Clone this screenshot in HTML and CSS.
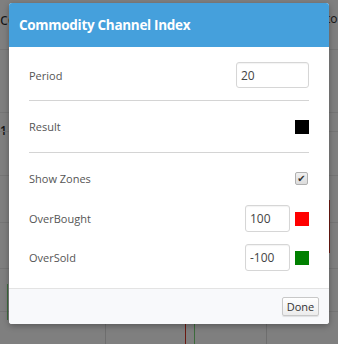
FILE: index.html
```html
<!DOCTYPE html>
<html lang="en">
<head>
    <meta charset="UTF-8">
    <meta name="viewport" content="width=device-width, initial-scale=1.0">
    <title>Commodity Channel Index</title>
    <link rel="stylesheet" href="styles.css">
</head>
<body>
    <!-- chart behind the modal overlay -->
    <div class="chart">
        <span class="chart-text left">ce</span>
        <span class="chart-text right">to</span>
        <span class="chart-text mid">1 l</span>
        <div class="hline" style="top: 49px"></div>
        <div class="hline" style="top: 112px"></div>
        <div class="hline" style="top: 131px"></div>
        <div class="hline" style="top: 175px"></div>
        <div class="hline" style="top: 222px"></div>
        <div class="hline" style="top: 268px"></div>
        <div class="hline" style="top: 311px"></div>
        <div class="vline" style="left: 105px"></div>
        <div class="vline" style="left: 266px"></div>
        <div class="vline red" style="left: 185px; top: 318px; height: 26px"></div>
        <div class="vline green" style="left: 194px; top: 318px; height: 26px"></div>
        <div class="vline green" style="left: 7px; top: 284px; height: 36px"></div>
        <div class="vline red" style="left: 329px; top: 200px; height: 53px"></div>
    </div>

    <div class="dialog">
        <div class="dialog-header">Commodity Channel Index</div>
        <div class="dialog-body">
            <div class="row row-period">
                <label>Period</label>
                <input class="field wide" type="text" value="20">
            </div>
            <div class="divider"></div>
            <div class="row row-result">
                <label>Result</label>
                <span class="swatch black"></span>
            </div>
            <div class="divider"></div>
            <div class="row row-zones">
                <label>Show Zones</label>
                <span class="check">&#10004;</span>
            </div>
            <div class="row row-level">
                <label>OverBought</label>
                <div class="controls">
                    <input class="field" type="text" value="100">
                    <span class="swatch red"></span>
                </div>
            </div>
            <div class="row row-level">
                <label>OverSold</label>
                <div class="controls">
                    <input class="field" type="text" value="-100">
                    <span class="swatch green"></span>
                </div>
            </div>
        </div>
        <div class="dialog-footer">
            <button class="done-button">Done</button>
        </div>
    </div>
</body>
</html>
```

FILE: styles.css
```css
* {
    margin: 0;
    padding: 0;
    box-sizing: border-box;
    font-family: 'Open Sans', 'Noto Sans', sans-serif;
}

body {
    background-color: #7f7f7f;
    width: 338px;
    height: 344px;
    overflow: hidden;
    position: relative;
    padding: 3px 0 0 9px;
}

.chart {
    position: absolute;
    top: 0;
    left: 0;
    width: 338px;
    height: 344px;
}

.chart-text {
    position: absolute;
    color: #141414;
    font-size: 16px;
}

.chart-text.left { left: 0; top: 8px; }
.chart-text.right { left: 326px; top: 10px; font-size: 12px; }
.chart-text.mid { left: 0; top: 122px; font-size: 12px; font-weight: 600; }

.hline {
    position: absolute;
    left: 0;
    width: 338px;
    height: 1px;
    background: #757575;
}

.vline {
    position: absolute;
    top: 324px;
    width: 1px;
    height: 20px;
    background: #6e6e6e;
}

.vline.red { background: #6b1a12; }
.vline.green { background: #3c6b3c; }

.dialog {
    position: relative;
    width: 320px;
    height: 321px;
    background: #ffffff;
    border-radius: 3px;
    box-shadow: 0 2px 6px rgba(0, 0, 0, 0.3);
    display: flex;
    flex-direction: column;
    overflow: hidden;
}

.dialog-header {
    height: 44px;
    background: #45a0dc;
    color: #ffffff;
    font-size: 13.5px;
    font-weight: 700;
    display: flex;
    align-items: center;
    padding-left: 10px;
    letter-spacing: -0.3px;
}

.dialog-body {
    flex: 1;
    padding: 15px 20px 0;
}

.row {
    display: flex;
    justify-content: space-between;
    align-items: center;
}

.row label {
    font-size: 11px;
    color: #555555;
}

.row-period {
    height: 26px;
    margin-bottom: 12px;
}

.row-result {
    height: 51px;
}

.row-zones {
    height: 50px;
}

.row-level {
    height: 27px;
    margin-top: 2px;
}

.row-level + .row-level {
    margin-top: 12px;
}

.divider {
    height: 1px;
    background: #d4d4d4;
}

.controls {
    display: flex;
    align-items: center;
    gap: 5px;
}

.field {
    width: 45px;
    height: 27px;
    border: 1px solid #d6d6d6;
    border-radius: 3px;
    padding: 0 4px;
    font-size: 12px;
    color: #444444;
    box-shadow: inset 0 1px 1px rgba(0, 0, 0, 0.05);
    outline: none;
}

.field.wide {
    width: 73px;
    height: 26px;
}

.swatch {
    display: block;
    width: 14px;
    height: 14px;
}

.black { background: #000000; }
.red { background: #ff0000; }
.green { background: #008000; }

.check {
    width: 13px;
    height: 13px;
    margin-right: 1px;
    border: 1px solid #b0b0b0;
    border-radius: 2px;
    background: linear-gradient(#f0f0f0, #dcdcdc);
    color: #333333;
    font-size: 10px;
    line-height: 11px;
    text-align: center;
    font-family: 'DejaVu Sans', sans-serif;
}

.dialog-footer {
    height: 36px;
    background: #f8f9fb;
    border-top: 1px solid #e3e3e3;
    display: flex;
    justify-content: flex-end;
    align-items: center;
    padding-right: 10px;
}

.done-button {
    width: 37px;
    height: 19px;
    font-size: 11px;
    color: #333333;
    background: linear-gradient(#ffffff, #ececec);
    border: 1px solid #c8c8c8;
    border-radius: 2px;
    box-shadow: 0 1px 1px rgba(0, 0, 0, 0.1);
}
```
